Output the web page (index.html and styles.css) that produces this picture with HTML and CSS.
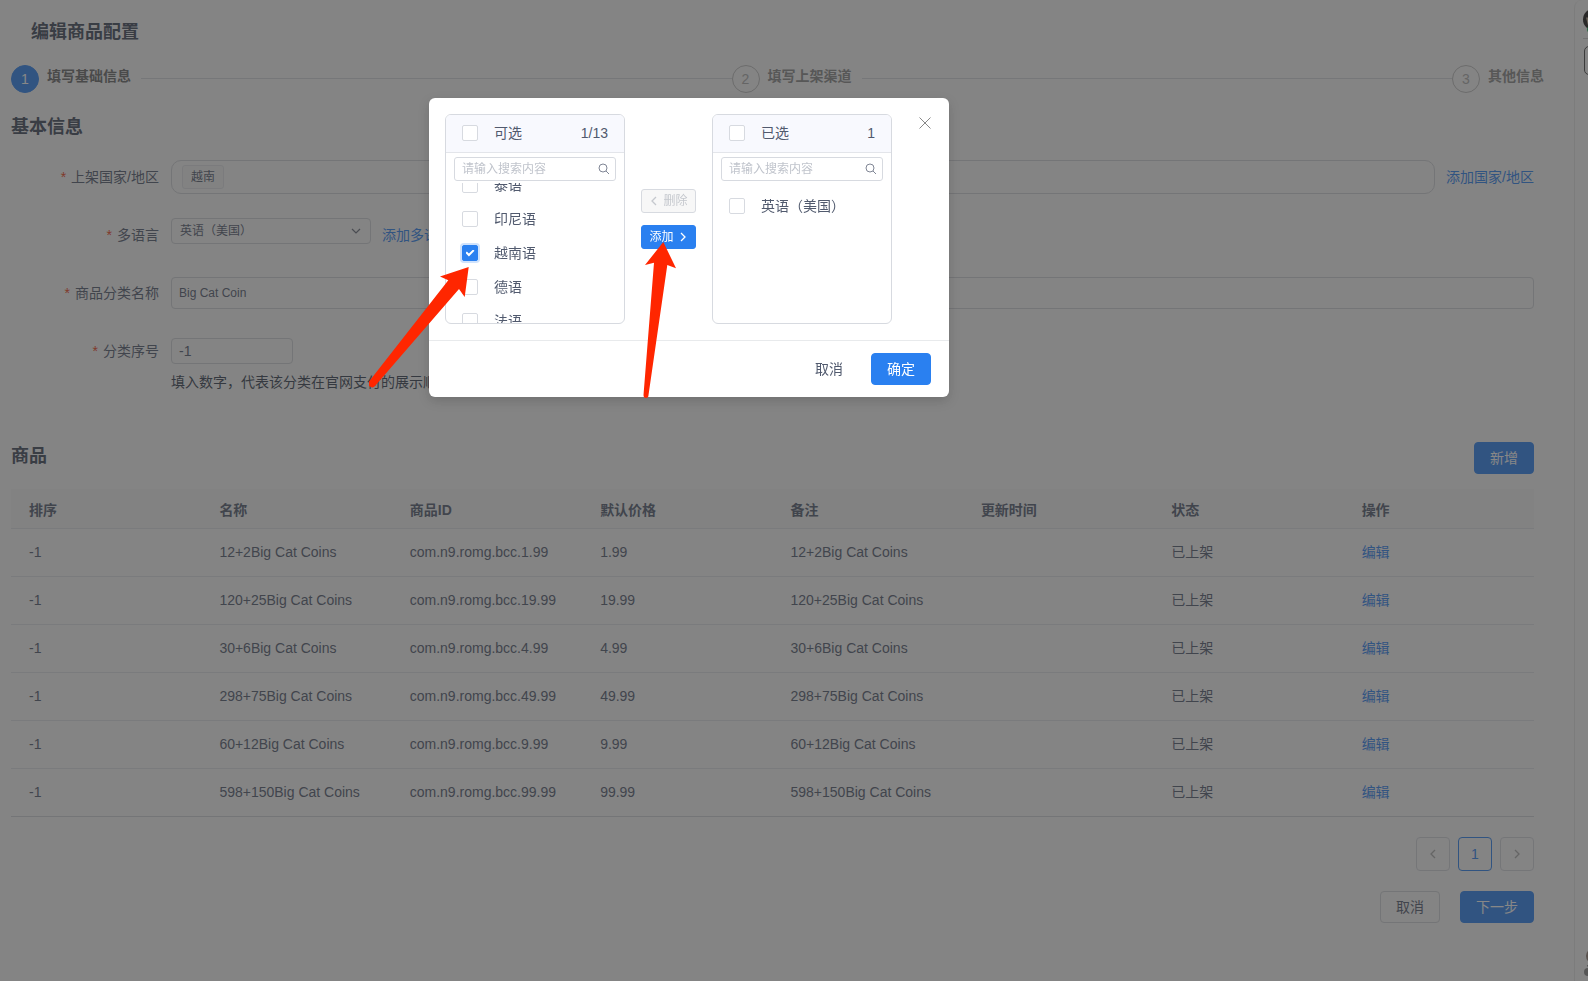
FILE: index.html
```html
<!DOCTYPE html>
<html lang="zh-CN">
<head>
<meta charset="utf-8">
<title>编辑商品配置</title>
<link rel="stylesheet" href="styles.css">
</head>
<body>
<div class="page">
  <main class="main">
    <h1 class="page-title">编辑商品配置</h1>
    <ol class="steps">
      <li class="step step-active"><span class="step-num">1</span><span class="step-name">填写基础信息</span></li>
      <li class="step"><span class="step-num">2</span><span class="step-name">填写上架渠道</span></li>
      <li class="step"><span class="step-num">3</span><span class="step-name">其他信息</span></li>
    </ol>

    <h2 class="section-title">基本信息</h2>
    <form class="form">
      <div class="form-row">
        <span class="form-label">上架国家/地区</span>
        <div class="tag-box"><span class="tag">越南</span></div>
        <a class="link" href="#">添加国家/地区</a>
      </div>
      <div class="form-row">
        <label class="form-label" for="lang">多语言</label>
        <div class="select-wrap">
          <select class="select" id="lang"><option>英语（美国）</option></select>
          <svg class="select-arrow" viewBox="0 0 10 10"><path d="M1 3l4 4 4-4"/></svg>
        </div>
        <a class="link" href="#">添加多语言</a>
      </div>
      <div class="form-row">
        <label class="form-label" for="name">商品分类名称</label>
        <input class="input input-wide" id="name" type="text" value="Big Cat Coin">
      </div>
      <div class="form-row">
        <label class="form-label" for="order">分类序号</label>
        <div class="order-field">
          <input class="input input-short" id="order" type="text" value="-1">
          <p class="help">填入数字，代表该分类在官网支付的展示顺序</p>
        </div>
      </div>
    </form>

    <div class="section-head">
      <h2 class="section-title">商品</h2>
      <button class="btn btn-primary" type="button">新增</button>
    </div>
    <table class="table">
      <thead>
        <tr><th>排序</th><th>名称</th><th>商品ID</th><th>默认价格</th><th>备注</th><th>更新时间</th><th>状态</th><th>操作</th></tr>
      </thead>
      <tbody>
        <tr><td>-1</td><td>12+2Big Cat Coins</td><td>com.n9.romg.bcc.1.99</td><td>1.99</td><td>12+2Big Cat Coins</td><td></td><td>已上架</td><td><a class="link" href="#">编辑</a></td></tr>
        <tr><td>-1</td><td>120+25Big Cat Coins</td><td>com.n9.romg.bcc.19.99</td><td>19.99</td><td>120+25Big Cat Coins</td><td></td><td>已上架</td><td><a class="link" href="#">编辑</a></td></tr>
        <tr><td>-1</td><td>30+6Big Cat Coins</td><td>com.n9.romg.bcc.4.99</td><td>4.99</td><td>30+6Big Cat Coins</td><td></td><td>已上架</td><td><a class="link" href="#">编辑</a></td></tr>
        <tr><td>-1</td><td>298+75Big Cat Coins</td><td>com.n9.romg.bcc.49.99</td><td>49.99</td><td>298+75Big Cat Coins</td><td></td><td>已上架</td><td><a class="link" href="#">编辑</a></td></tr>
        <tr><td>-1</td><td>60+12Big Cat Coins</td><td>com.n9.romg.bcc.9.99</td><td>9.99</td><td>60+12Big Cat Coins</td><td></td><td>已上架</td><td><a class="link" href="#">编辑</a></td></tr>
        <tr><td>-1</td><td>598+150Big Cat Coins</td><td>com.n9.romg.bcc.99.99</td><td>99.99</td><td>598+150Big Cat Coins</td><td></td><td>已上架</td><td><a class="link" href="#">编辑</a></td></tr>
      </tbody>
    </table>

    <nav class="pager" aria-label="分页">
      <button class="page-btn" type="button" aria-label="上一页"><svg class="icon" viewBox="0 0 10 10"><path d="M7 1L3 5l4 4"/></svg></button>
      <button class="page-btn page-current" type="button">1</button>
      <button class="page-btn" type="button" aria-label="下一页"><svg class="icon" viewBox="0 0 10 10"><path d="M3 1l4 4-4 4"/></svg></button>
    </nav>
    <div class="actions">
      <button class="btn btn-default" type="button">取消</button>
      <button class="btn btn-primary" type="button">下一步</button>
    </div>
  </main>

  <aside class="side">
    <div class="side-top">
      <svg class="avatar" viewBox="0 0 22 22"><circle cx="11" cy="11" r="11" fill="#181414"/><path d="M3 9h8v11l-6-3z" fill="#b9a790"/><circle cx="7" cy="21" r="3" fill="#1eb45c"/></svg>
    </div>
    <div class="side-box"></div>
    <svg class="side-bottom" viewBox="0 0 12 34"><circle cx="11" cy="9" r="8" fill="#8d7a70"/><path d="M4 19l8-3" stroke="#555" fill="none"/><circle cx="5" cy="25" r="4" fill="#858585"/></svg>
  </aside>
</div>

<div class="mask">
  <section class="modal" role="dialog" aria-label="添加多语言">
    <div class="modal-body">
      <div class="transfer">
        <div class="list-head">
          <input class="check" type="checkbox" id="all-left"><label for="all-left">可选</label><span class="count">1/13</span>
        </div>
        <div class="search">
          <input class="search-input" type="text" placeholder="请输入搜索内容" aria-label="搜索可选">
          <svg class="search-icon" viewBox="0 0 12 12"><circle cx="5" cy="5" r="4"/><path d="M8 8l3 3"/></svg>
        </div>
        <ul class="items items-scrolled">
          <li class="item"><input class="check" type="checkbox" id="th"><label for="th">泰语</label></li>
          <li class="item"><input class="check" type="checkbox" id="id"><label for="id">印尼语</label></li>
          <li class="item"><input class="check" type="checkbox" id="vi" checked><label for="vi">越南语</label></li>
          <li class="item"><input class="check" type="checkbox" id="de"><label for="de">德语</label></li>
          <li class="item"><input class="check" type="checkbox" id="fr"><label for="fr">法语</label></li>
        </ul>
      </div>
      <div class="ops">
        <button class="op op-disabled" type="button" disabled><svg class="icon" viewBox="0 0 10 10"><path d="M7 1L3 5l4 4"/></svg>删除</button>
        <button class="op op-primary" type="button">添加<svg class="icon" viewBox="0 0 10 10"><path d="M3 1l4 4-4 4"/></svg></button>
      </div>
      <div class="transfer">
        <div class="list-head">
          <input class="check" type="checkbox" id="all-right"><label for="all-right">已选</label><span class="count">1</span>
        </div>
        <div class="search">
          <input class="search-input" type="text" placeholder="请输入搜索内容" aria-label="搜索已选">
          <svg class="search-icon" viewBox="0 0 12 12"><circle cx="5" cy="5" r="4"/><path d="M8 8l3 3"/></svg>
        </div>
        <ul class="items">
          <li class="item"><input class="check" type="checkbox" id="en"><label for="en">英语（美国）</label></li>
        </ul>
      </div>
      <button class="close" type="button" aria-label="关闭"><svg viewBox="0 0 12 12" width="12" height="12"><path d="M.5.5l11 11M11.500.5l-11 11"/></svg></button>
    </div>
    <div class="modal-foot">
      <button class="btn btn-text" type="button">取消</button>
      <button class="btn btn-primary" type="button">确定</button>
    </div>
    <svg class="arrows" viewBox="0 0 320 160" width="320" height="160" aria-hidden="true">
      <path d="M99.700 25L71 34.500l8.300 3.800L0 139.500q-2 3 1 5t5-.5L90 47l5.700 8z"/>
      <path d="M294.300 0L276 23l9-2.300L274.500 153q0 3 2.500 3t2.500-3L298.300 23l8.700 3.300z"/>
    </svg>
  </section>
</div>
</body>
</html>
```
FILE: styles.css
```css
* { box-sizing: border-box; }

body {
  margin: 0;
  background: #f7f7f7;
  color: #515a6e;
  font: 14px/20px "Liberation Sans", "Noto Sans CJK SC", sans-serif;
}

h1, h2, p, ol, ul { margin: 0; padding: 0; }
ol, ul { list-style: none; }
button, input, select { font: inherit; color: inherit; }
svg { display: block; }

.page { display: flex; min-height: 100vh; }

.main { flex: 1; padding: 20px 40px 20px 11px; }

.page-title {
  padding-left: 20px;
  font-size: 18px;
  line-height: 24px;
  font-weight: 600;
  color: #3c4658;
}

.section-title {
  font-size: 18px;
  line-height: 24px;
  font-weight: 600;
  color: #3c4658;
}

.link { color: #2a80f0; text-decoration: none; }

/* steps */
.steps { display: flex; margin: 21px -10px 22px 0; }
.step { display: flex; color: #888; }
.step:not(:last-child) { flex: 1; }
.step:not(:last-child)::after {
  content: "";
  flex: 1;
  height: 1px;
  margin: 13px 0 0 10px;
  background: #d4d7dc;
}
.step-num {
  width: 28px;
  height: 28px;
  border: 1px solid #bbb;
  border-radius: 50%;
  line-height: 26px;
  text-align: center;
  color: #aaa;
}
.step-name { margin-left: 8px; line-height: 22px; font-weight: 600; }
.step-active { color: #666; }
.step-active .step-num { background: #2a80f0; border-color: #2a80f0; color: #fff; }

/* form */
.form { display: grid; gap: 24px; margin-top: 21px; }
.form-row { display: flex; align-items: flex-start; line-height: 34px; }
.form-label { width: 148px; margin-right: 12px; text-align: right; }
.form-label::before { content: "*"; margin-right: 5px; color: #ed4014; }
.form-row .link { margin-left: 11px; }

.tag-box {
  flex: 1;
  display: flex;
  align-items: center;
  height: 34px;
  padding-left: 10px;
  border: 1px solid #cfd1d6;
  border-radius: 10px;
}
.tag {
  height: 24px;
  padding: 0 8px;
  border: 1px solid #e0e2e6;
  border-radius: 3px;
  background: #f3f3f3;
  font-size: 12px;
  line-height: 22px;
}
.select-wrap { position: relative; width: 200px; height: 26px; }
.select {
  display: block;
  width: 100%;
  height: 26px;
  padding: 0 8px;
  border: 1px solid #cfd1d6;
  border-radius: 4px;
  background: transparent;
  appearance: none;
  font-size: 12px;
  line-height: 20px;
}
.select-arrow {
  position: absolute;
  top: 8px;
  right: 10px;
  width: 10px;
  height: 10px;
  fill: none;
  stroke: #666c7a;
  stroke-width: 1.2;
}
.input {
  padding: 0 7px;
  border: 1px solid #cfd1d6;
  border-radius: 4px;
  background: transparent;
}
.input-wide { flex: 1; height: 32px; margin-top: 1px; font-size: 12px; }
.order-field { display: grid; }
.input-short { width: 122px; height: 26px; margin: 4px 0; }
.help { margin-top: 4px; line-height: 20px; color: #323c4e; }

/* products */
.section-head {
  display: flex;
  align-items: flex-start;
  justify-content: space-between;
  margin: 50px 0 15px;
}
.section-head .section-title { margin-top: 2px; }
.btn {
  height: 32px;
  padding: 0 15px 1px;
  border: 1px solid transparent;
  border-radius: 4px;
  background: transparent;
  line-height: 20px;
}
.btn-primary { background: #2a80f0; border-color: #2a80f0; color: #fff; }
.btn-default { border-color: #cfd1d6; }

.table { width: 100%; border-collapse: separate; border-spacing: 0; table-layout: fixed; }
.table th, .table td { text-align: left; border-bottom: 1px solid #dfe1e6; }
.table th { height: 40px; padding: 2px 18px 0; background: #f2f2f3; font-weight: 600; }
.table td { height: 48px; padding: 0 18px 2px; }
.table tr:last-child td { border-bottom-color: #d0d2d8; }

.pager { display: flex; justify-content: flex-end; gap: 8px; margin-top: 20px; }
.page-btn {
  display: flex;
  align-items: center;
  justify-content: center;
  width: 34px;
  height: 34px;
  padding: 0;
  border: 1px solid #d3d5da;
  border-radius: 4px;
  background: transparent;
  color: #aaa;
}
.page-current { border-color: #2a80f0; color: #2a80f0; }
.icon { width: 10px; height: 10px; fill: none; stroke: currentColor; stroke-width: 1.3; }

.actions { display: flex; justify-content: flex-end; gap: 20px; margin-top: 20px; }

/* side panel */
.side {
  display: flex;
  flex-direction: column;
  width: 14px;
  padding-left: 8px;
  border-left: 1px solid #e4e4e4;
  border-top-left-radius: 8px;
  overflow: hidden;
}
.side-top { height: 39px; padding-top: 7px; border-bottom: 1px solid #ccc; }
.avatar { width: 22px; height: 25px; overflow: visible; }
.side-box {
  width: 40px;
  height: 29px;
  margin: 7px 0 0 1px;
  border: 1px solid #444;
  border-radius: 5px;
}
.side-bottom { width: 12px; height: 34px; margin-top: auto; }

/* dialog */
.mask {
  position: fixed;
  inset: 0;
  display: flex;
  justify-content: center;
  align-items: flex-start;
  padding: 98px 210px 0 0;
  background: rgba(55, 55, 55, .6);
}
.modal {
  position: relative;
  width: 520px;
  border-radius: 6px;
  background: #fff;
  box-shadow: 0 4px 12px rgba(0, 0, 0, .15);
}
.modal-body { display: flex; padding: 16px; }
.transfer {
  display: flex;
  flex-direction: column;
  width: 180px;
  height: 210px;
  border: 1px solid #d7dae0;
  border-radius: 6px;
  overflow: hidden;
}
.list-head {
  display: flex;
  align-items: center;
  gap: 16px;
  height: 38px;
  padding: 0 16px 1px;
  border-bottom: 1px solid #e3e5ea;
  background: #f8f9fe;
}
.count { margin-left: auto; }
.search { position: relative; margin: 4px 8px 2px; }
.search-input {
  display: block;
  width: 100%;
  height: 24px;
  padding: 0 24px 0 7px;
  border: 1px solid #d7dae0;
  border-radius: 3px;
  background: #fff;
  font-size: 12px;
}
.search-input::placeholder { color: #c0c4cc; }
.search-icon {
  position: absolute;
  top: 6px;
  right: 6px;
  width: 12px;
  height: 12px;
  fill: none;
  stroke: #808695;
}
.items { flex: 1; display: flex; flex-direction: column; padding-top: 6px; overflow: hidden; }
.items-scrolled { justify-content: center; padding-top: 0; }
.item { flex: none; display: flex; align-items: center; gap: 16px; height: 34px; padding: 0 16px; }
.check {
  flex: none;
  width: 16px;
  height: 16px;
  margin: 0;
  border: 1px solid #d7dae0;
  border-radius: 2px;
  background: #fff;
  appearance: none;
}
.check:checked {
  display: grid;
  place-items: center;
  border-color: #2a80f0;
  background: #2a80f0;
  box-shadow: 0 0 0 2px #cfe2fc;
}
.check:checked::before {
  content: "";
  width: 9px;
  height: 7px;
  background: #fff;
  clip-path: polygon(0 50%, 15% 30%, 38% 58%, 84% 0, 100% 18%, 38% 100%);
}
.ops {
  flex: 1;
  display: flex;
  flex-direction: column;
  justify-content: center;
  gap: 12px;
  padding: 0 16px;
}
.op {
  display: flex;
  align-items: center;
  justify-content: center;
  gap: 4px;
  height: 24px;
  padding: 0;
  border: 1px solid #d7dae0;
  border-radius: 3px;
  font-size: 12px;
}
.op-disabled { background: #f7f7f7; color: #c5c8ce; }
.op-primary { border-color: #2a80f0; background: #2a80f0; color: #fff; }
.close {
  align-self: flex-start;
  margin: 3px 2px 0 27px;
  padding: 0;
  border: 0;
  background: none;
}
.close path { fill: none; stroke: #888; }
.modal-foot {
  display: flex;
  justify-content: flex-end;
  gap: 12px;
  padding: 12px 18px;
  border-top: 1px solid #e8eaec;
}

/* pointer arrows drawn over the dialog */
.arrows { position: absolute; left: -60px; top: 144px; fill: #ff2600; }
```
